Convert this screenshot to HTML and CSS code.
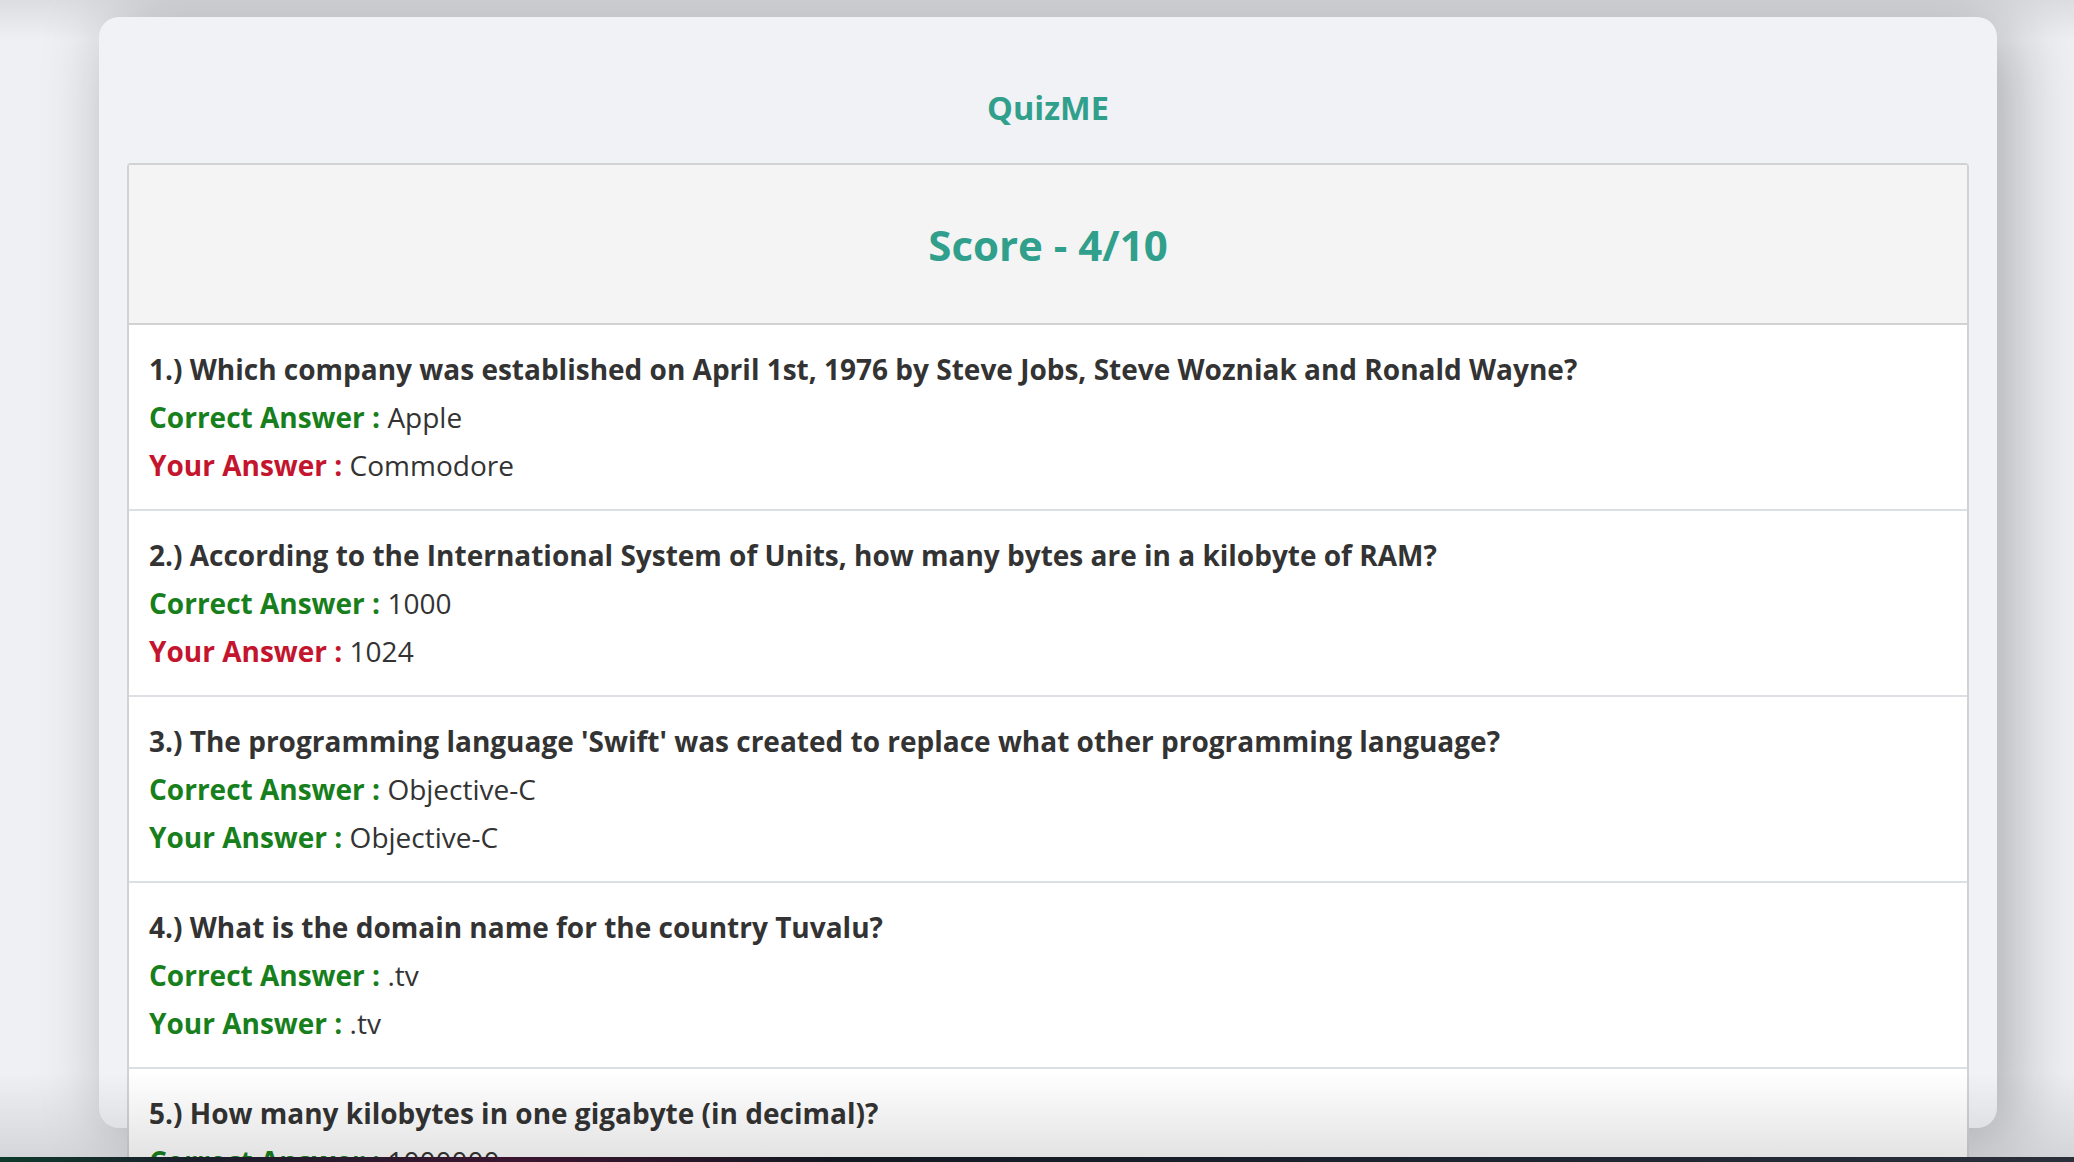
FILE: index.html
```html
<!DOCTYPE html>
<html lang="en">
<head>
<meta charset="utf-8">
<title>QuizME</title>
<link rel="stylesheet" href="styles.css">
</head>
<body>
<div class="window">
  <h1 class="brand">QuizME</h1>
  <div class="results">
    <div class="score-head"><h2 class="score">Score - 4/10</h2></div>
    <div class="item">
      <p class="question">1.) Which company was established on April 1st, 1976 by Steve Jobs, Steve Wozniak and Ronald Wayne?</p>
      <p class="answer"><span class="label ok">Correct Answer :</span> Apple</p>
      <p class="answer"><span class="label bad">Your Answer :</span> Commodore</p>
    </div>
    <div class="item">
      <p class="question">2.) According to the International System of Units, how many bytes are in a kilobyte of RAM?</p>
      <p class="answer"><span class="label ok">Correct Answer :</span> 1000</p>
      <p class="answer"><span class="label bad">Your Answer :</span> 1024</p>
    </div>
    <div class="item">
      <p class="question">3.) The programming language 'Swift' was created to replace what other programming language?</p>
      <p class="answer"><span class="label ok">Correct Answer :</span> Objective-C</p>
      <p class="answer"><span class="label ok">Your Answer :</span> Objective-C</p>
    </div>
    <div class="item">
      <p class="question">4.) What is the domain name for the country Tuvalu?</p>
      <p class="answer"><span class="label ok">Correct Answer :</span> .tv</p>
      <p class="answer"><span class="label ok">Your Answer :</span> .tv</p>
    </div>
    <div class="item">
      <p class="question">5.) How many kilobytes in one gigabyte (in decimal)?</p>
      <p class="answer"><span class="label ok">Correct Answer :</span> 1000000</p>
      <p class="answer"><span class="label ok">Your Answer :</span> 1000000</p>
    </div>
  </div>
</div>
<div class="desk-strip"></div>
</body>
</html>
```
FILE: styles.css
```css
html, body {
  margin: 0;
  padding: 0;
}
body {
  height: 1162px;
  overflow: hidden;
  background: #eff0f4;
  font-family: "Open Sans", "Noto Sans", sans-serif;
  color: #333;
  position: relative;
}
body::before {
  content: "";
  position: absolute;
  left: 0;
  right: 0;
  top: 0;
  height: 40px;
  background: linear-gradient(#dcdde1, rgba(239,240,244,0));
  z-index: 0;
}
body::after {
  content: "";
  position: absolute;
  left: 0;
  right: 0;
  bottom: 5px;
  height: 85px;
  background: linear-gradient(rgba(0,0,0,0), rgba(0,0,0,0.11));
  z-index: 5;
  pointer-events: none;
}
.window {
  position: relative;
  z-index: 1;
  box-sizing: border-box;
  width: 1898px;
  height: 1111px;
  margin: 17px 0 0 99px;
  padding: 0 28px;
  background: #f1f2f6;
  border-radius: 20px;
  box-shadow: 14px 6px 70px rgba(0,0,0,0.30);
}
.brand {
  margin: 0;
  padding-top: 68px;
  font-size: 32.5px;
  line-height: 46px;
  font-weight: 700;
  color: #309f8b;
  text-align: center;
}
.results {
  margin-top: 32px;
  background: #fff;
  border: 2px solid #d2d2d2;
  border-radius: 4px;
}
.score-head {
  background: #f4f4f4;
  border-bottom: 2px solid #d2d2d2;
  padding: 50px 0 48px;
  text-align: center;
}
.score {
  margin: 0;
  font-size: 42px;
  line-height: 60px;
  font-weight: 700;
  color: #309f8b;
}
.item {
  padding: 20px 20px 20px;
  border-bottom: 2px solid #dcdfe4;
}
.question, .answer {
  margin: 0;
  font-size: 28px;
  line-height: 48px;
}
.question {
  font-weight: 700;
  color: #333;
}
.label {
  font-weight: 700;
}
.ok { color: #17801c; }
.bad { color: #c4152e; }
.desk-strip {
  position: absolute;
  left: 0;
  right: 0;
  bottom: 0;
  height: 5px;
  z-index: 6;
  background: linear-gradient(90deg, #0f3a2c 0%, #1b1d2a 10%, #3b1530 25%, #141821 40%, #1c2430 70%, #2a2f3a 100%);
}
```
